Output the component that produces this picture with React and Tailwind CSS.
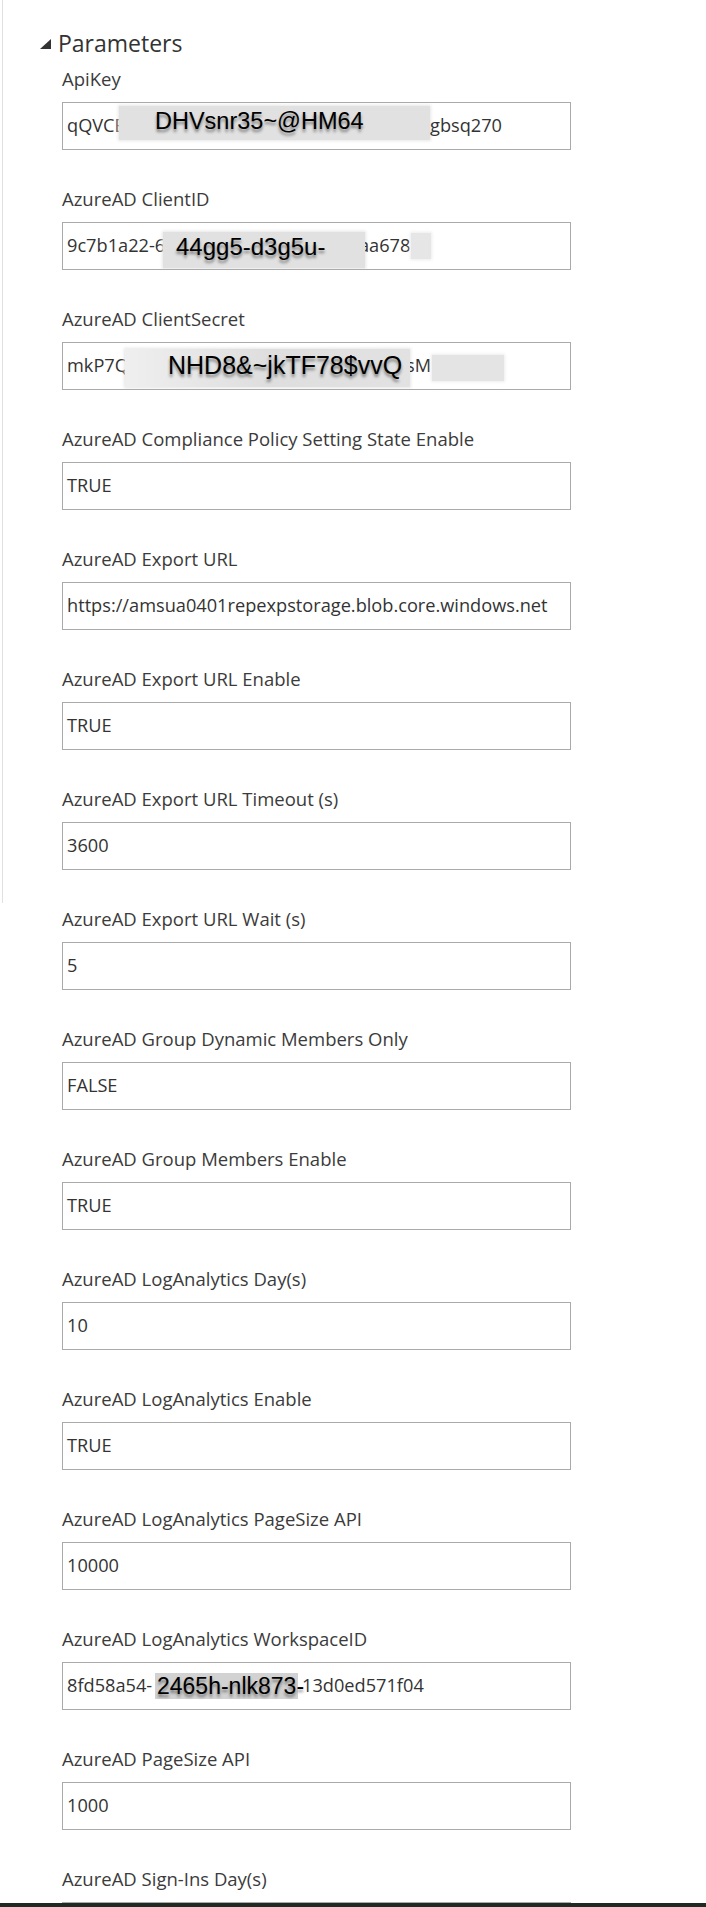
import React from "react"

const redText =
  "font-['Liberation_Sans',Arial,sans-serif] leading-none text-black [text-shadow:0_3px_3px_rgba(0,0,0,0.45)] whitespace-nowrap"

function Clip({ className, children, inner = "" }) {
  return (
    <span className={`shrink-0 overflow-hidden whitespace-nowrap ${className}`}>
      <span className={`inline-block ${inner}`}>{children}</span>
    </span>
  )
}

function ApiKeyValue() {
  return (
    <>
      <Clip className="w-[52px]">qQVCE</Clip>
      <span className="mb-[6px] flex h-[34px] w-[311px] shrink-0 items-center bg-[#e1e1e1] pl-[36px] shadow-[0_0_3px_1px_#e6e6e6]">
        <span className={`${redText} pb-[2px] text-[23.5px]`}>DHVsnr35~@HM64</span>
      </span>
      <span className="whitespace-nowrap">gbsq270</span>
    </>
  )
}

function ClientIdValue() {
  return (
    <>
      <Clip className="w-[96px]">9c7b1a22-6</Clip>
      <span className="mt-[8px] flex h-[36px] w-[202px] shrink-0 items-start bg-[#e1e1e1] pl-[13px] pt-[3px] shadow-[0_0_3px_1px_#e6e6e6]">
        <span className={`${redText} text-[24px]`}>44gg5-d3g5u-</span>
      </span>
      <Clip className="w-[46px]" inner="ml-[-6px]">aa678</Clip>
      <span className="h-[26px] w-[20px] shrink-0 bg-[#e6e6e6] shadow-[0_0_3px_1px_#ececec]" />
    </>
  )
}

function ClientSecretValue() {
  return (
    <>
      <Clip className="w-[58px]">mkP7Q</Clip>
      <span className="mt-[4px] flex h-[38px] w-[285px] shrink-0 items-start bg-gradient-to-r from-[#efefef] via-[#dedede] to-[#e2e2e2] pl-[43px] pt-[4px] shadow-[0_0_3px_1px_#e6e6e6]">
        <span className={`${redText} text-[25px]`}>NHD8&amp;~jkTF78$vvQ</span>
      </span>
      <Clip className="w-[22px]" inner="ml-[-4px]">sM</Clip>
      <span className="mt-[4px] h-[26px] w-[72px] shrink-0 bg-[#e4e4e4] shadow-[0_0_3px_1px_#ececec]" />
    </>
  )
}

function WorkspaceValue() {
  return (
    <>
      <Clip className="w-[88px]">8fd58a54-</Clip>
      <span className="flex h-[26px] w-[143px] shrink-0 items-center bg-[#d2d2d2] pl-[2px]">
        <span className={`${redText} text-[23px]`}>2465h-nlk873-</span>
      </span>
      <span className="ml-[4px] whitespace-nowrap">13d0ed571f04</span>
    </>
  )
}

const params = [
  { label: "ApiKey", value: <ApiKeyValue /> },
  { label: "AzureAD ClientID", value: <ClientIdValue /> },
  { label: "AzureAD ClientSecret", value: <ClientSecretValue /> },
  { label: "AzureAD Compliance Policy Setting State Enable", value: "TRUE" },
  { label: "AzureAD Export URL", value: "https://amsua0401repexpstorage.blob.core.windows.net" },
  { label: "AzureAD Export URL Enable", value: "TRUE" },
  { label: "AzureAD Export URL Timeout (s)", value: "3600" },
  { label: "AzureAD Export URL Wait (s)", value: "5" },
  { label: "AzureAD Group Dynamic Members Only", value: "FALSE" },
  { label: "AzureAD Group Members Enable", value: "TRUE" },
  { label: "AzureAD LogAnalytics Day(s)", value: "10" },
  { label: "AzureAD LogAnalytics Enable", value: "TRUE" },
  { label: "AzureAD LogAnalytics PageSize API", value: "10000" },
  { label: "AzureAD LogAnalytics WorkspaceID", value: <WorkspaceValue /> },
  { label: "AzureAD PageSize API", value: "1000" },
  { label: "AzureAD Sign-Ins Day(s)", value: "30" },
]

function ParamRow({ label, value }) {
  return (
    <div className="mb-[37px] ml-[22px]">
      <div className="h-[24px] whitespace-nowrap text-[18.5px] leading-[24px] text-[#3b3b3b]">{label}</div>
      <div className="mt-[11px] flex h-[48px] w-[509px] items-center overflow-hidden border border-[#aaaaaa] bg-white pl-[4px] text-[18.2px] text-[#333333]">
        {value}
      </div>
    </div>
  )
}

export default function App() {
  return (
    <div className="flex h-[1907px] w-[706px] flex-col overflow-hidden bg-white font-['Open_Sans',sans-serif]">
      <div className="flex h-[1903px] items-start overflow-hidden">
        <div className="ml-[2px] h-[903px] w-px shrink-0 bg-[#e1e1e1]" />
        <div className="flex-1 pl-[37px] pt-[28px]">
          <div className="mb-[9px] flex h-[30px] items-center gap-[7px]">
            <svg width="11" height="10" viewBox="0 0 11 10" className="mt-[2px]">
              <polygon points="11,0 11,10 0,10" fill="#333333" />
            </svg>
            <span className="text-[23px] leading-[30px] text-[#333333]">Parameters</span>
          </div>
          {params.map((p) => (
            <ParamRow key={p.label} label={p.label} value={p.value} />
          ))}
        </div>
      </div>
      <div className="h-[4px] shrink-0 bg-[#1e2a22]" />
    </div>
  )
}
